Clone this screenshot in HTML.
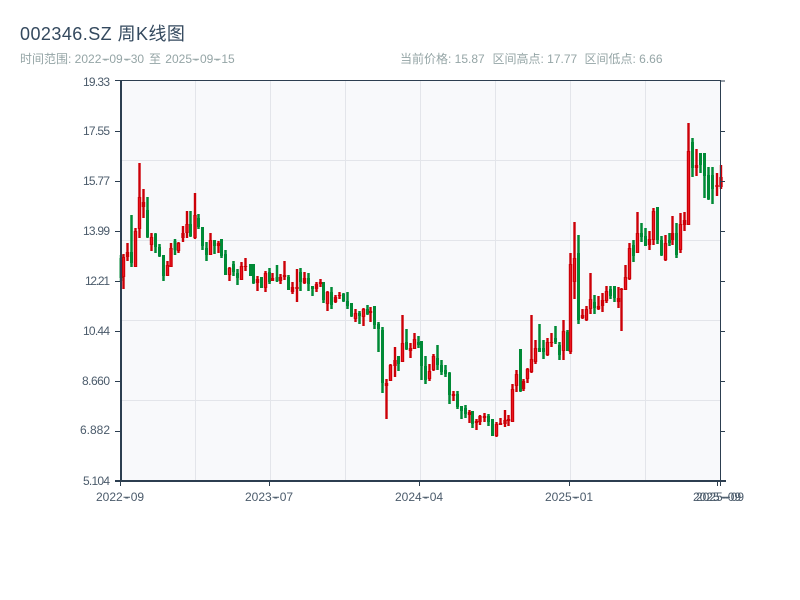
<!DOCTYPE html>
<html lang="zh-CN">
<head>
<meta charset="utf-8">
<title>002346.SZ 周K线图</title>
<style>
html,body{margin:0;padding:0;background:#fff;width:800px;height:600px;overflow:hidden}
svg{display:block}
text{font-family:"Liberation Sans","Noto Sans CJK SC",sans-serif}
</style>
</head>
<body>
<svg width="800" height="600" viewBox="0 0 800 600" xmlns="http://www.w3.org/2000/svg">
<rect width="800" height="600" fill="#fff"/>
<text x="20" y="40" font-size="18" letter-spacing=".45" fill="#34495e">002346.SZ 周K线图</text>
<text x="20" y="63" font-size="12" fill="#95a5a6">时间范围: 2022<tspan dx="2">-</tspan><tspan dx="2">09</tspan><tspan dx="2">-</tspan><tspan dx="2">30</tspan> <tspan dx="1.5">至</tspan> <tspan dx="1">2025</tspan><tspan dx="2">-</tspan><tspan dx="2">09</tspan><tspan dx="2">-</tspan><tspan dx="2">15</tspan></text>
<path d="M102.5 59.3H109M124 59.3H130.5M192.5 59.3H199M214 59.3H220.5" stroke="#95a5a6" stroke-width="1" fill="none"/>
<text x="400" y="63" font-size="12" fill="#95a5a6">当前价格: 15.87</text>
<text x="492.5" y="63" font-size="12" fill="#95a5a6">区间高点: 17.77</text>
<text x="584.5" y="63" font-size="12" fill="#95a5a6">区间低点: 6.66</text>
<rect x="120" y="81" width="600" height="400" fill="#f8f9fb"/>
<path d="M120 160.5H720M120 240.5H720M120 320.5H720M120 400.5H720M195.5 81V481M270.5 81V481M345.5 81V481M420.5 81V481M495.5 81V481M570.5 81V481M645.5 81V481" stroke="#e3e5ea" stroke-width="1" fill="none"/>

<path fill="none" stroke="#008a36" stroke-width="2.5" d="M121 255V281M131.5 215V267M147.5 197V238M155.5 233V253M159.5 244V257M163.5 255V281M175 239V255M190.5 211V237M198.5 214V229M202.5 227V250M206.5 242V261M214.5 240V254M221.5 239V258M225.5 250V275M233.5 261V276M237.5 269V285M250.5 264V276M253.5 264V284M261.5 277V288M269.5 268V284M277 265V282M288.5 275V290M300.5 268V291M308.5 273V291M312.5 286V296M323.5 282V303M331.5 287V309M343.5 293V302M347.5 292V309M351.5 303V317M359.5 311V324M367.5 305V315M374.5 306V329M378.5 322V352M382.5 327V393M398.5 356V371M406.5 329V350M418.5 336V348M421.5 341V380M425.5 356V384M437.5 345V370M441.5 360V375M445.5 365V377M449.5 372V404M457.5 391V409M461.5 406V419M465.5 405V418M472.5 411V428M488.5 414V426M492.5 419V436M520.5 349V392M539.5 324V352M543.5 340V359M555.5 326V344M559.5 342V360M567.5 330V351M578.5 235V324M594.5 295V314M610.5 286V299M614.5 286V302M633.5 240V262M641.5 223V242M645.5 228V246M657.5 207V244M661.5 236V256M669.5 233V246M676.5 223V258M692.5 138V177M700.5 153V173M704.5 153V198M708.5 167V200M712.5 167V204"/>
<path fill="none" stroke="#008a36" stroke-width="3" d="M121 258V278M131.5 252V263M147.5 210V237M155.5 234V247M159.5 247V256M163.5 255V276M175 241V250M190.5 224V236M198.5 218V227M202.5 227V246M206.5 248V255M214.5 240V246M221.5 239V256M225.5 254V275M233.5 264V272M237.5 273V278M250.5 264V276M253.5 264V283M261.5 277V288M269.5 272V282M277 277V281M288.5 277V290M300.5 272V282M308.5 278V284M312.5 286V289M323.5 282V300M331.5 292V305M343.5 294V301M347.5 301V306M351.5 303V316M359.5 313V316M367.5 309V314M374.5 306V325M378.5 324V329M382.5 330V383M398.5 356V364M406.5 342V349M418.5 342V345M421.5 341V366M425.5 366V380M437.5 358V365M441.5 365V372M445.5 370V374M449.5 373V395M457.5 394V407M461.5 406V411M465.5 408V414M472.5 411V424M488.5 416V422M492.5 419V436M520.5 349V391M539.5 348V352M543.5 348V352M555.5 338V342M559.5 345V355M567.5 332V351M578.5 253V320M594.5 302V308M610.5 289V296M614.5 286V298M633.5 245V256M641.5 233V237M645.5 236V246M657.5 207V240M661.5 240V255M669.5 240V243M676.5 233V255M692.5 142V168M700.5 153V165M704.5 153V176M708.5 175V199M712.5 175V189"/>

<path fill="none" stroke="#cc0007" stroke-width="2.4" d="M123.5 254V289M127.5 243V261M135.5 228V267M139.5 163V238M143.5 189V218M151.5 233V251M167.5 261V276M171 243V267M178.5 242V253M183 226V242M187 211V238M195 193V239M210.5 233V255M218.5 241V253M229.5 267V281M241.5 262V280M245.5 258V271M257.5 276V291M265.5 271V292M272.5 273V281M280.5 274V284M284.5 261V280M292.5 282V294M297 269V302M304.5 272V284M316.5 282V292M320.5 279V287M327.5 291V311M335.5 295V303M339.5 292V299M355.5 309V322M363.5 308V326M370.5 307V322M386.5 379V419M390.5 364V381M395 347V377M402.5 315V362M410.5 343V358M414.5 333V349M429.5 364V381M433.5 354V371M453.5 391V401M469.5 410V423M476.5 419V430M480 415V425M484.5 413V422M496.5 422V437M500.5 418V425M505 410V427M508.5 415V426M512.5 384V422M516.5 370V392M523.5 379V391M527.5 368V383M531.5 315V373M535.5 340V364M547.5 338V356M551.5 333V347M563.5 320V360M570.5 253V354M574.5 222V299M582.5 309V319M586.5 306V321M590.5 273V314M598.5 296V310M602.5 293V312M606.5 286V303M618.5 287V308M621.5 288V331M625.5 265V290M629.5 243V280M637.5 212V253M649.5 231V250M653.5 208V245M665.5 235V261M672.5 216V245M680.5 213V253M684.5 212V231M688.5 123V225M696.5 149V176M717 173V196M721 165V189"/>
<path fill="none" stroke="#cc0007" stroke-width="3.4" d="M123.5 257V277M127.5 252V257M135.5 231V267M139.5 197V229M143.5 202V207M151.5 237V245M167.5 265V276M171 248V267M178.5 243V251M183 233V238M187 224V233M195 215V238M210.5 240V255M218.5 243V246M229.5 268V275M241.5 266V280M245.5 266V267M257.5 279V283M265.5 273V288M272.5 278V281M280.5 277V281M284.5 275V277M292.5 287V292M297 287V289M304.5 278V283M316.5 284V289M320.5 282V284M327.5 292V304M335.5 297V302M339.5 295V296M355.5 313V319M363.5 309V317M370.5 311V313M386.5 383V386M390.5 365V381M395 360V366M402.5 343V362M410.5 348V351M414.5 339V349M429.5 371V379M433.5 356V370M453.5 394V396M469.5 412V415M476.5 421V423M480 416V422M484.5 416V418M496.5 424V436M500.5 423V425M505 420V424M508.5 419V421M512.5 389V422M516.5 374V386M523.5 381V389M527.5 369V379M531.5 359V372M535.5 348V362M547.5 342V355M551.5 342V343M563.5 331V351M570.5 264V352M574.5 258V282M582.5 315V318M586.5 309V320M590.5 299V309M598.5 306V309M602.5 300V306M606.5 291V301M618.5 298V302M621.5 289V290M625.5 277V290M629.5 248V279M637.5 233V253M649.5 239V245M653.5 211V240M665.5 243V260M672.5 233V240M680.5 224V250M684.5 220V225M688.5 151V225M696.5 165V168M717 185V187M721 177V187"/>
<path fill="none" stroke="#ea1620" stroke-width="1" d="M123.5 258V276M135.5 232V266M139.5 198V228M151.5 238V244M167.5 266V275M171 249V266M178.5 244V250M187 225V232M195 216V237M210.5 241V254M229.5 269V274M241.5 267V279M265.5 274V287M327.5 293V303M355.5 314V318M363.5 310V316M390.5 366V380M402.5 344V361M414.5 340V348M429.5 372V378M433.5 357V369M496.5 425V435M512.5 390V421M516.5 375V385M527.5 370V378M531.5 360V371M535.5 349V361M547.5 343V354M563.5 332V350M570.5 265V351M574.5 259V281M586.5 310V319M590.5 300V308M606.5 292V300M625.5 278V289M629.5 249V278M637.5 234V252M653.5 212V239M665.5 244V259M680.5 225V249M688.5 152V224"/>

<rect x="115" y="80" width="606" height="1" fill="#2c3e50"/>
<rect x="120" y="81" width="2" height="401" fill="#2c3e50"/>
<rect x="720" y="81" width="1" height="400" fill="#2c3e50"/>
<rect x="115" y="480" width="611" height="2" fill="#2c3e50"/>
<path d="M115 131.5H120M115 181.5H120M115 231.5H120M115 281.5H120M115 331.5H120M115 381.5H120M115 431.5H120M720 131.5H725M720 181.5H725M720 231.5H725M720 281.5H725M720 331.5H725M720 381.5H725M720 431.5H725M720 81H725M120.5 482V486M269.5 482V486M419.5 482V486M569.5 482V486M717.5 482V486M720.5 482V486" stroke="#2c3e50" stroke-width="1" fill="none"/>

<g font-size="12" fill="#4b5b6b" text-anchor="end">
<text x="110" y="86" textLength="27">19.33</text>
<text x="110" y="135" textLength="27">17.55</text>
<text x="110" y="185" textLength="27">15.77</text>
<text x="110" y="235" textLength="27">13.99</text>
<text x="110" y="285" textLength="25">12.21</text>
<text x="110" y="335" textLength="27">10.44</text>
<text x="110" y="385" textLength="28">8.660</text>
<text x="110" y="434">6.882</text>
<text x="110" y="485" textLength="27">5.104</text>
</g>
<g font-size="12" fill="#4b5b6b">
<text x="96" y="501">2022<tspan dx="2">-</tspan><tspan dx="2">09</tspan></text>
<text x="245" y="501">2023<tspan dx="2">-</tspan><tspan dx="2">07</tspan></text>
<text x="395" y="501">2024<tspan dx="2">-</tspan><tspan dx="2">04</tspan></text>
<text x="545" y="501">2025<tspan dx="2">-</tspan><tspan dx="2">01</tspan></text>
<text x="693" y="501">2025<tspan dx="2">-</tspan><tspan dx="2">09</tspan></text>
<text x="696" y="501">2025<tspan dx="2">-</tspan><tspan dx="2">09</tspan></text>
</g>
<path d="M123.5 497.3H130M272.5 497.3H279M422.5 497.3H429M572.5 497.3H579M720.5 497.3H727M723.5 497.3H730" stroke="#4b5b6b" stroke-width="1" fill="none"/>
</svg>
</body>
</html>
